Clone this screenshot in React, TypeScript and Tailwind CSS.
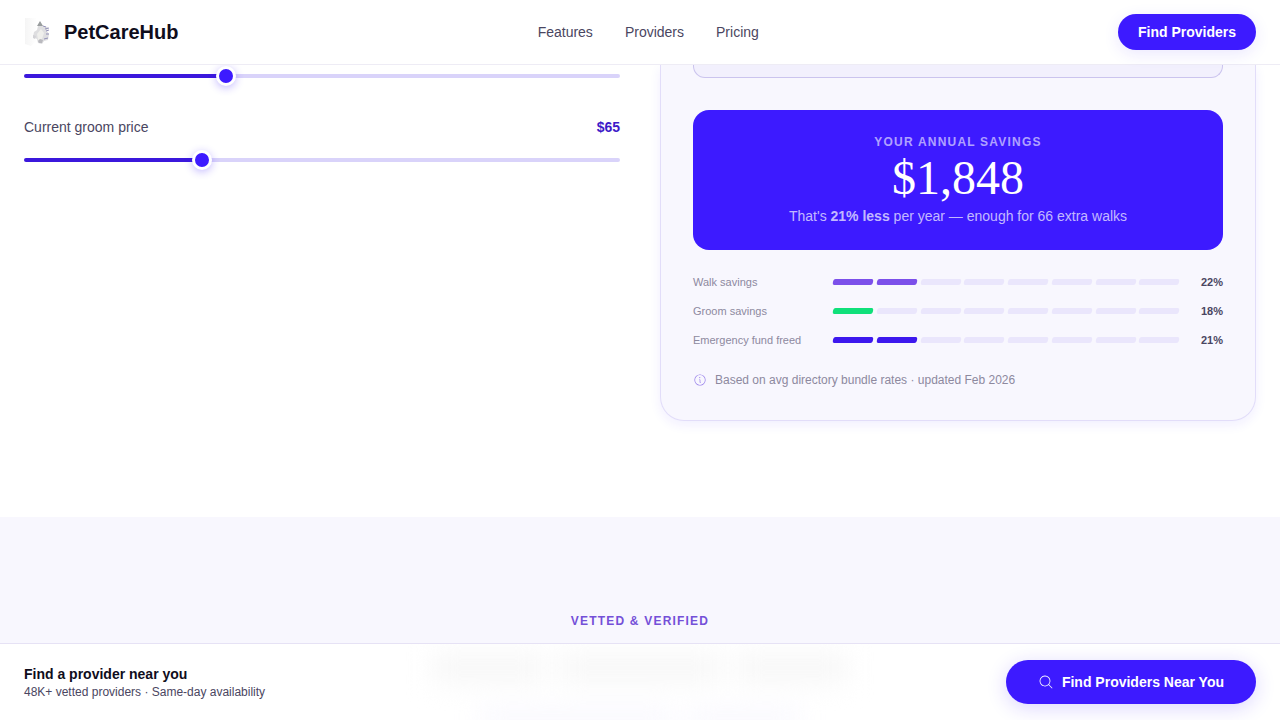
import { useState } from 'react';
import { PiInfoLight, PiMagnifyingGlassLight } from 'react-icons/pi';

const NAV_LINKS = ['Features', 'Providers', 'Pricing'];

const SEGMENTS = [0, 1, 2, 3, 4, 5, 6, 7];

const SAVINGS = [
  { label: 'Walk savings', percent: 22, filled: 2, color: 'bg-[#7c50ea]' },
  { label: 'Groom savings', percent: 18, filled: 1, color: 'bg-[#10e07a]' },
  { label: 'Emergency fund freed', percent: 21, filled: 2, color: 'bg-[#3d18ee]' },
];

interface PriceSliderProps {
  id: string;
  label: string;
  min: number;
  max: number;
  value: number;
  onChange: (value: number) => void;
}

function PriceSlider({ id, label, min, max, value, onChange }: PriceSliderProps) {
  const percent = ((value - min) / (max - min)) * 100;

  return (
    <input
      id={id}
      type="range"
      aria-label={label}
      min={min}
      max={max}
      value={value}
      onChange={(e) => onChange(Number(e.target.value))}
      style={{
        backgroundImage: `linear-gradient(to right, #3b18dc ${percent}%, #d9d3fa ${percent}%)`,
      }}
      className="block h-1 w-full cursor-pointer appearance-none rounded-full [&::-webkit-slider-thumb]:size-5 [&::-webkit-slider-thumb]:appearance-none [&::-webkit-slider-thumb]:rounded-full [&::-webkit-slider-thumb]:border-3 [&::-webkit-slider-thumb]:border-white [&::-webkit-slider-thumb]:bg-[#3d1aff] [&::-webkit-slider-thumb]:shadow-[0_2px_8px_rgba(61,26,255,0.3)]"
    />
  );
}

function Logo() {
  return (
    <svg viewBox="0 0 32 32" className="size-8" aria-hidden="true">
      <defs>
        <linearGradient id="logoFade" x1="0" x2="1">
          <stop offset="0" stopColor="#f5f5f5" />
          <stop offset="1" stopColor="#ffffff" />
        </linearGradient>
        <filter id="logoSoft" x="-20%" y="-20%" width="140%" height="140%">
          <feGaussianBlur stdDeviation="0.7" />
        </filter>
      </defs>
      <g filter="url(#logoSoft)">
        <path d="M1 2h12v22l-6 6-6-2z" fill="url(#logoFade)" />
        <path
          d="M16 6l3 4 5 1-1 4 2 3-1 6-4 1-2 3-4-1-1-4-4-2 1-5 3-2 1-4z"
          fill="#dedee0"
        />
        <path d="M13 10l3-5 3 5z" fill="#999d9e" />
        <path d="M13 18l4-5 3 4-2 6-4 1z" fill="#efefec" />
        <path
          d="M19 10l3 1M21 13l4-1M22 15l3-1M22 18h3M20 23l4-1"
          stroke="#9492b8"
          strokeWidth="1"
        />
        <path d="M14 25l2-2 3 1-1 3h-3z" fill="#b9b9be" />
        <path d="M9 19l3 1-1 3-2-1z" fill="#d2d2d6" />
      </g>
    </svg>
  );
}

function Header() {
  return (
    <header className="z-10 flex h-[65px] shrink-0 items-center justify-between border-b border-[#eeecf5] bg-white px-6">
      <a href="#" className="flex items-center gap-2 text-xl font-bold text-[#0f0d1c]">
        <Logo />
        PetCareHub
      </a>
      <nav className="flex gap-8 text-sm text-[#4a4661]">
        {NAV_LINKS.map((link) => (
          <a key={link} href={`#${link.toLowerCase()}`}>
            {link}
          </a>
        ))}
      </nav>
      <button
        type="button"
        className="h-9 cursor-pointer rounded-full bg-[#3d1aff] px-5 text-sm font-bold text-white shadow-[0_4px_16px_rgba(61,26,255,0.1)]"
      >
        Find Providers
      </button>
    </header>
  );
}

function SavingsRow({ label, percent, filled, color }: (typeof SAVINGS)[number]) {
  return (
    <div className="flex items-center gap-3 text-[11px] leading-4">
      <span className="w-32 text-[#8d899e]">{label}</span>
      <div className="grid flex-1 grid-cols-8 gap-1">
        {SEGMENTS.map((segment) => (
          <span
            key={segment}
            className={`h-1.5 -skew-x-12 rounded-xs ${segment < filled ? color : 'bg-[#eae6fc]'}`}
          />
        ))}
      </div>
      <span className="w-8 text-right font-bold text-[#4a4661]">{percent}%</span>
    </div>
  );
}

function ResultCard() {
  return (
    <div className="rounded-b-3xl border border-t-0 border-[#e2ddf9] bg-[#f8f7fe] px-8 pb-8 shadow-[0_4px_12px_rgba(61,26,255,0.07)]">
      <div className="mb-8 h-[13px] rounded-b-xl border border-t-0 border-[#cbc4ee] bg-[#f2f0fd]" />
      <div className="flex flex-col items-center gap-1 rounded-2xl bg-[#3d1aff] p-6 text-center">
        <p className="text-xs font-bold tracking-widest text-white/60">YOUR ANNUAL SAVINGS</p>
        <p className="font-['Liberation_Serif',serif] text-5xl leading-none text-white">$1,848</p>
        <p className="text-sm text-white/70">
          That's <strong>21% less</strong> per year — enough for 66 extra walks
        </p>
      </div>
      <div className="mt-6 flex flex-col gap-[13px]">
        {SAVINGS.map((row) => (
          <SavingsRow key={row.label} {...row} />
        ))}
      </div>
      <p className="mt-6 flex items-center gap-2 text-xs text-[#8d899e]">
        <PiInfoLight className="size-3.5 text-[#8e74e8]" />
        Based on avg directory bundle rates · updated Feb 2026
      </p>
    </div>
  );
}

function StickyBar() {
  return (
    <div className="relative z-10 flex shrink-0 items-center justify-between overflow-hidden border-t border-[#e6e2f5] bg-white px-6 py-4">
      {/* frosted traces of the content below the bar */}
      <div
        aria-hidden="true"
        className="absolute inset-x-0 top-0 flex flex-col items-center gap-6 pt-2 blur-md"
      >
        <div className="flex gap-4">
          <span className="h-8 w-28 bg-[#f8f8f8]" />
          <span className="h-8 w-40 bg-[#f8f8f8]" />
          <span className="h-8 w-28 bg-[#f8f8f8]" />
        </div>
        <div className="flex gap-4">
          <span className="h-5 w-48 bg-[#f9f8fe]" />
          <span className="h-5 w-28 bg-[#f9f8fe]" />
        </div>
      </div>
      <div className="relative">
        <p className="text-sm font-bold text-[#0f0d1c]">Find a provider near you</p>
        <p className="text-xs text-[#4a4661]">48K+ vetted providers · Same-day availability</p>
      </div>
      <button
        type="button"
        className="relative flex h-11 cursor-pointer items-center gap-2 rounded-full bg-[#3d1aff] px-8 text-sm font-bold text-white shadow-[0_4px_20px_rgba(61,26,255,0.18)]"
      >
        <PiMagnifyingGlassLight className="size-4" />
        Find Providers Near You
      </button>
    </div>
  );
}

function App() {
  const [walkPrice, setWalkPrice] = useState<number>(20);
  const [groomPrice, setGroomPrice] = useState<number>(65);

  return (
    <div className="flex h-screen flex-col overflow-hidden bg-white font-['Liberation_Sans',Arial,sans-serif]">
      <Header />
      <main className="flex min-h-0 flex-1 flex-col overflow-hidden">
        <section className="grid shrink-0 grid-cols-2 gap-10 px-6 pb-24">
          <div className="pt-[9px]">
            <PriceSlider
              id="walk-price"
              label="Current walk price"
              min={10}
              max={40}
              value={walkPrice}
              onChange={setWalkPrice}
            />
            <div className="mt-[39px] mb-[21px] flex justify-between text-sm">
              <label htmlFor="groom-price" className="text-[#4a4661]">
                Current groom price
              </label>
              <output htmlFor="groom-price" className="font-bold text-[#3d1ac8]">
                ${groomPrice}
              </output>
            </div>
            <PriceSlider
              id="groom-price"
              label="Current groom price"
              min={30}
              max={150}
              value={groomPrice}
              onChange={setGroomPrice}
            />
          </div>
          <ResultCard />
        </section>
        <section className="flex-1 bg-[#f8f7fe] pt-24 text-center">
          <p className="text-xs font-bold tracking-widest text-[#7450d8]">VETTED &amp; VERIFIED</p>
        </section>
      </main>
      <StickyBar />
    </div>
  );
}

export default App;
